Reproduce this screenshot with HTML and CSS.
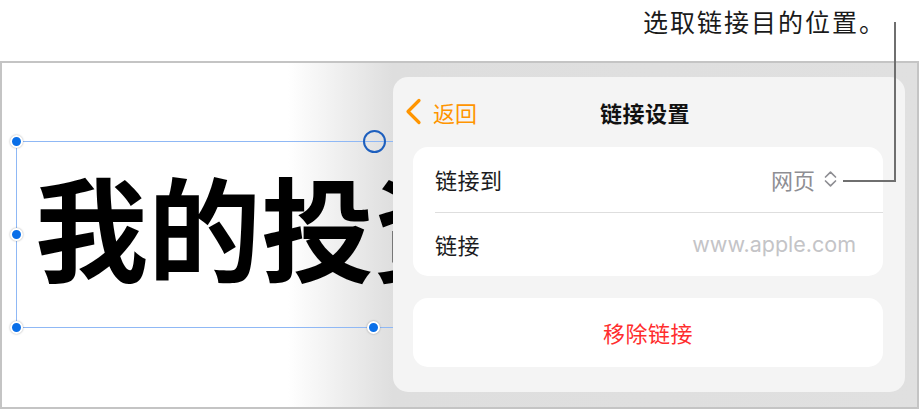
FILE: index.html
```html
<!DOCTYPE html>
<html lang="zh-CN">
<head>
<meta charset="utf-8">
<title>链接设置</title>
<link rel="stylesheet" href="styles.css">
</head>
<body>
<div class="page">
  <div class="callout"><span class="callout-text">选取链接目的位置。</span></div>
  <div class="frame">
    <div class="textbox">
      <div class="big">我的投资</div>
      <span class="h h-tl"></span>
      <span class="h h-ml"></span>
      <span class="h h-bl"></span>
      <span class="h h-bm"></span>
      <span class="ring"></span>
    </div>
    <div class="popover">
      <div class="pop-header">
        <div class="back">
          <svg class="chev" width="18" height="27" viewBox="0 0 18 27"><path d="M15 2.5 L4 13.5 L15 24.5" fill="none" stroke="#ff9500" stroke-width="3.2" stroke-linecap="round" stroke-linejoin="round"/></svg>
          <span>返回</span>
        </div>
        <div class="title">链接设置</div>
        <div></div>
      </div>
      <div class="card">
        <div class="row row1">
          <span class="label">链接到</span>
          <span class="value">网页<svg class="updown" width="15" height="18" viewBox="0 0 15 18"><path d="M2.5 7 L7.5 2.2 L12.5 7 M2.5 11 L7.5 15.8 L12.5 11" fill="none" stroke="#8e8e93" stroke-width="1.7" stroke-linecap="round" stroke-linejoin="round"/></svg></span>
        </div>
        <div class="sep"></div>
        <div class="row row2">
          <span class="label">链接</span>
          <span class="placeholder">www.apple.com</span>
        </div>
      </div>
      <div class="card card-btn">移除链接</div>
    </div>
  </div>
  <div class="leader-v"></div>
  <div class="leader-h"></div>
</div>
</body>
</html>
```

FILE: styles.css
```css
* { box-sizing: border-box; }
html, body { margin: 0; padding: 0; background: #fff; }
body {
  font-family: "Noto Sans CJK SC", "Noto Sans", sans-serif;
  color: #1c1c1e;
}
.page {
  position: relative;
  width: 920px;
  height: 410px;
  overflow: hidden;
}
.callout {
  height: 61px;
  padding: 4px 34px 0 0;
  display: flex;
  justify-content: flex-end;
}
.callout-text {
  font-size: 25px;
  line-height: 34px;
  letter-spacing: 2px;
  color: #1a1a1a;
}
.frame {
  position: relative;
  width: 919px;
  height: 348px;
  border: 2px solid #c4c4c4;
  background: linear-gradient(90deg, #fff 0, #fff 286px, #dedede 391px, #e0e0e0 100%);
  overflow: hidden;
}
.textbox {
  position: absolute;
  left: 14px;
  top: 78px;
  width: 715px;
  height: 187px;
  border: 1px solid #8fb8f5;
  padding: 7px 0 0 18px;
}
.big {
  width: 358px;
  overflow: hidden;
  font-size: 113px;
  font-weight: 700;
  line-height: 150px;
  color: #000;
  white-space: nowrap;
}
.h {
  position: absolute;
  width: 13px;
  height: 13px;
  border-radius: 50%;
  background: #0a6fe8;
  border: 2px solid #fff;
  box-shadow: 0 0 2px rgba(0,0,0,0.35);
}
.h-tl { left: -7px; top: -7px; }
.h-ml { left: -7px; top: 86px; }
.h-bl { left: -7px; bottom: -7px; }
.h-bm { left: 350px; bottom: -7px; }
.ring {
  position: absolute;
  left: 346px;
  top: -12px;
  width: 23px;
  height: 23px;
  border-radius: 50%;
  border: 2px solid #1d5fbe;
}
.popover {
  position: absolute;
  left: 391px;
  top: 14px;
  width: 512px;
  height: 315px;
  border-radius: 15px;
  background: #f4f4f4;
  padding: 0 22px 25px 20px;
  display: flex;
  flex-direction: column;
}
.pop-header {
  height: 70px;
  display: grid;
  grid-template-columns: 1fr auto 1fr;
  align-items: center;
  margin: 0 -22px 0 -20px;
  padding: 0 8px 0 0;
}
.back {
  display: flex;
  align-items: center;
  gap: 11px;
  margin-left: 11px;
  color: #ff9500;
  font-size: 22px;
}
.chev { display: block; }
.title {
  font-size: 22px;
  font-weight: 700;
  letter-spacing: 0.5px;
  color: #111;
}
.card {
  background: #fff;
  border-radius: 15px;
}
.row {
  display: flex;
  align-items: center;
  justify-content: space-between;
  padding-left: 22px;
}
.row1 { height: 65px; padding-right: 45px; }
.row2 { height: 63px; padding-right: 27px; }
.label {
  font-size: 22px;
  letter-spacing: 0.5px;
  color: #1c1c1e;
}
.value {
  display: flex;
  align-items: center;
  gap: 8px;
  font-size: 22px;
  color: #8e8e93;
}
.updown { display: block; }
.placeholder {
  font-family: Inter, "Noto Sans", sans-serif;
  font-size: 21.5px;
  color: #c4c4c7;
}
.sep {
  height: 1px;
  background: #dedede;
  margin-left: 22px;
}
.card-btn {
  margin-top: 22px;
  height: 70px;
  display: flex;
  align-items: center;
  justify-content: center;
  font-size: 22px;
  letter-spacing: 0.5px;
  color: #ff2d2d;
}
.leader-v {
  position: absolute;
  left: 894px;
  top: 22px;
  width: 2px;
  height: 160px;
  background: #6f6f6f;
}
.leader-h {
  position: absolute;
  left: 843px;
  top: 180px;
  width: 53px;
  height: 2px;
  background: #6f6f6f;
}
```
